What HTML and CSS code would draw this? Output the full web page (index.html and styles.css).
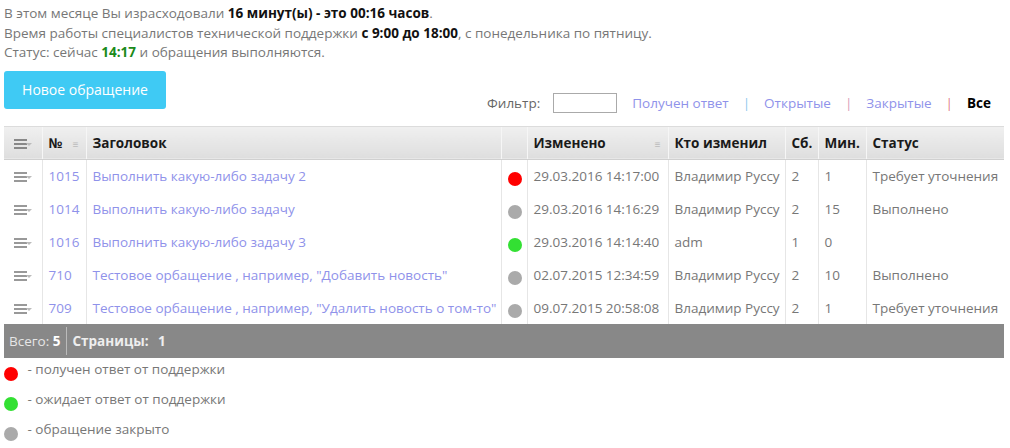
FILE: index.html
```html
<!DOCTYPE html>
<html lang="ru">
<head>
  <meta charset="UTF-8" />
  <title>Обращения в поддержку</title>
  <link rel="stylesheet" href="styles.css">
</head>
<body>
  <div class="info">
    <p>В этом месяце Вы израсходовали <b>16 минут(ы) - это 00:16 часов</b>.</p>
    <p>Время работы специалистов технической поддержки <b>с 9:00 до 18:00</b>, с понедельника по пятницу.</p>
    <p>Статус: сейчас <b class="ok">14:17</b> и обращения выполняются.</p>
  </div>

  <div class="toolbar">
    <button class="btn-new">Новое обращение</button>
    <div class="filter">
      <span class="filter-label">Фильтр:</span>
      <input type="text" class="filter-input" />
      <a href="#">Получен ответ</a>
      <span class="sep sep-blue">|</span>
      <a href="#">Открытые</a>
      <span class="sep sep-pink">|</span>
      <a href="#">Закрытые</a>
      <span class="sep sep-red">|</span>
      <a href="#" class="active">Все</a>
    </div>
  </div>

  <table class="grid">
    <colgroup>
      <col style="width:38px"><col style="width:44px"><col style="width:415px"><col style="width:26px">
      <col style="width:141px"><col style="width:117px"><col style="width:33px"><col style="width:48px"><col style="width:138px">
    </colgroup>
    <thead>
      <tr>
        <th class="menu"><span class="burger dark"></span></th>
        <th>№ <span class="sort">≡</span></th>
        <th>Заголовок</th>
        <th></th>
        <th>Изменено <span class="sort">≡</span></th>
        <th>Кто изменил</th>
        <th>Сб.</th>
        <th>Мин.</th>
        <th>Статус</th>
      </tr>
    </thead>
    <tbody id="rows"></tbody>
    <tfoot>
      <tr>
        <td colspan="9">
          <div class="pager">
            <span class="total">Всего: <b>5</b></span>
            <span class="pages"><b>Страницы:</b> <b class="num">1</b></span>
          </div>
        </td>
      </tr>
    </tfoot>
  </table>

  <ul class="legend">
    <li><span class="dot red"></span> - получен ответ от поддержки</li>
    <li><span class="dot green"></span> - ожидает ответ от поддержки</li>
    <li><span class="dot grey"></span> - обращение закрыто</li>
  </ul>

  <script>
    const tickets = [
      { id: 1015, title: 'Выполнить какую-либо задачу 2', dot: 'red', changed: '29.03.2016 14:17:00', who: 'Владимир Руссу', sb: 2, min: 1, status: 'Требует уточнения' },
      { id: 1014, title: 'Выполнить какую-либо задачу', dot: 'grey', changed: '29.03.2016 14:16:29', who: 'Владимир Руссу', sb: 2, min: 15, status: 'Выполнено' },
      { id: 1016, title: 'Выполнить какую-либо задачу 3', dot: 'green', changed: '29.03.2016 14:14:40', who: 'adm', sb: 1, min: 0, status: '' },
      { id: 710, title: 'Тестовое орбащение , например, "Добавить новость"', dot: 'grey', changed: '02.07.2015 12:34:59', who: 'Владимир Руссу', sb: 2, min: 10, status: 'Выполнено' },
      { id: 709, title: 'Тестовое орбащение , например, "Удалить новость о том-то"', dot: 'grey', changed: '09.07.2015 20:58:08', who: 'Владимир Руссу', sb: 2, min: 1, status: 'Требует уточнения' }
    ];

    const rows = document.getElementById('rows');
    tickets.forEach(t => {
      const tr = document.createElement('tr');
      tr.innerHTML = `
        <td class="menu"><span class="burger"></span></td>
        <td><a href="#">${t.id}</a></td>
        <td><a href="#">${t.title}</a></td>
        <td class="mark"><span class="dot ${t.dot}"></span></td>
        <td>${t.changed}</td>
        <td>${t.who}</td>
        <td>${t.sb}</td>
        <td>${t.min}</td>
        <td>${t.status}</td>`;
      rows.appendChild(tr);
    });
  </script>
</body>
</html>
```

FILE: styles.css
```css
body {
  margin: 0;
  padding: 4px;
  font-family: 'Open Sans', sans-serif;
  font-size: 13.5px;
  color: #777;
  background: #fff;
}
a {
  color: #8f92ea;
  text-decoration: none;
}
.info p {
  margin: 0;
  line-height: 19.6px;
}
.info b {
  color: #111;
}
.info b.ok {
  color: #1a8a1a;
}
.toolbar {
  display: flex;
  justify-content: space-between;
  align-items: flex-start;
  margin-top: 8px;
  margin-bottom: 13px;
}
.btn-new {
  width: 162px;
  height: 38px;
  border: none;
  border-radius: 3px;
  background: #3fcaf4;
  color: #fff;
  font-family: 'Open Sans', sans-serif;
  font-size: 14px;
  cursor: pointer;
}
.filter {
  display: flex;
  align-items: center;
  margin-top: 22px;
  margin-right: 15px;
  height: 20px;
}
.filter-label {
  color: #666;
  margin-right: 13px;
}
.filter-input {
  width: 64px;
  height: 20px;
  box-sizing: border-box;
  border: 1px solid #aaa;
  margin: 0 15px 0 0;
  padding: 0;
}
.sep {
  margin: 0 14px;
}
.sep-blue { color: #8ec7ee; }
.sep-pink { color: #d9a0b8; }
.sep-red { color: #e07a8a; }
.filter a.active {
  color: #000;
  font-weight: bold;
}
.grid {
  width: 1000px;
  table-layout: fixed;
  border-collapse: collapse;
}
.grid thead tr {
  height: 33px;
}
.grid tbody tr {
  height: 33px;
}
.grid th {
  padding: 0 6px;
  line-height: 18px;
  text-align: left;
  color: #1a1a1a;
  font-weight: bold;
  background: linear-gradient(#f0f0f0, #dedede);
  border-top: 1px solid #dcdcdc;
  border-bottom: 1px solid #d0d0d0;
  border-left: 1px solid #f6f6f6;
  white-space: nowrap;
  position: relative;
}
.grid th:first-child {
  border-left: none;
}
.grid td {
  padding: 0 6px;
  line-height: 18px;
  border-left: 1px solid #e6e6e6;
  white-space: nowrap;
  overflow: hidden;
}
.grid tbody td:first-child {
  border-left: none;
}
.grid td.menu, .grid th.menu {
  padding: 0 0 0 10px;
}
.grid td.mark {
  padding: 0 0 0 6px;
}
.grid td.mark .dot {
  position: relative;
  top: 2px;
}
.sort {
  position: absolute;
  right: 7px;
  top: 8px;
  font-size: 10px;
  font-weight: normal;
  color: #bbb;
}
.burger {
  display: inline-block;
  position: relative;
  width: 18px;
  height: 10px;
  vertical-align: middle;
  background: linear-gradient(#999 0 2px, transparent 2px 4px, #999 4px 6px, transparent 6px 8px, #999 8px 10px) left / 13px 10px no-repeat;
}
.burger::after {
  content: "";
  position: absolute;
  right: 0;
  top: 4px;
  border-left: 3px solid transparent;
  border-right: 3px solid transparent;
  border-top: 3px solid #bbb;
}
.burger.dark {
  background: linear-gradient(#888 0 2px, transparent 2px 4px, #888 4px 6px, transparent 6px 8px, #888 8px 10px) left / 13px 10px no-repeat;
}
.dot {
  display: inline-block;
  width: 14px;
  height: 14px;
  border-radius: 50%;
  vertical-align: middle;
}
.dot.red { background: #f00; }
.dot.green { background: #33e033; }
.dot.grey { background: #aaa; }
.grid tfoot td {
  height: 34px;
  padding: 0;
  background: #888;
  border: none;
}
.pager {
  display: flex;
  align-items: center;
  height: 34px;
  color: #e6e6e6;
}
.total {
  padding: 0 5px;
  border-right: 1px solid #bbb;
  line-height: 28px;
}
.total b {
  color: #fff;
}
.pages {
  padding-left: 6px;
  color: #eee;
}
.pages .num {
  margin-left: 6px;
}
.legend {
  list-style: none;
  margin: 0;
  padding: 0;
}
.legend li {
  height: 30px;
  line-height: 22px;
  color: #777;
}
.legend .dot {
  margin-right: 6px;
  position: relative;
  top: 3px;
}
```
